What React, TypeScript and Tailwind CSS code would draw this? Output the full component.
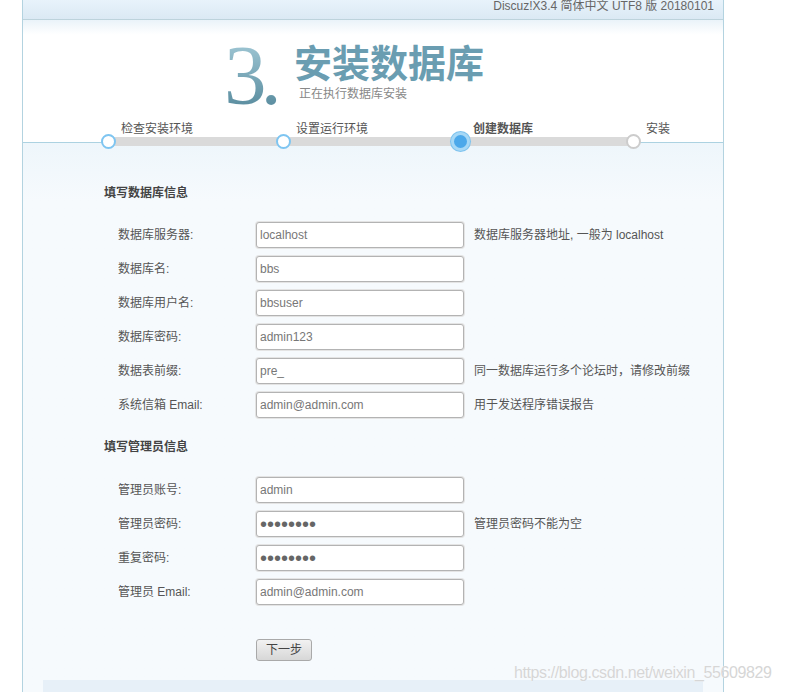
import React from 'react';

const steps = [
	{ label: '检查安装环境', x: 85, state: 'done' },
	{ label: '设置运行环境', x: 260, state: 'done' },
	{ label: '创建数据库', x: 437, state: 'current' },
	{ label: '安装', x: 610, state: 'todo' },
];

const dbFields = [
	{ label: '数据库服务器:', value: 'localhost', hint: '数据库服务器地址, 一般为 localhost' },
	{ label: '数据库名:', value: 'bbs', hint: '' },
	{ label: '数据库用户名:', value: 'bbsuser', hint: '' },
	{ label: '数据库密码:', value: 'admin123', hint: '' },
	{ label: '数据表前缀:', value: 'pre_', hint: '同一数据库运行多个论坛时，请修改前缀' },
	{ label: '系统信箱 Email:', value: 'admin@admin.com', hint: '用于发送程序错误报告' },
];

const adminFields = [
	{ label: '管理员账号:', value: 'admin', hint: '', password: false },
	{ label: '管理员密码:', value: 'admin123', hint: '管理员密码不能为空', password: true },
	{ label: '重复密码:', value: 'admin123', hint: '', password: true },
	{ label: '管理员 Email:', value: 'admin@admin.com', hint: '', password: false },
];

function Field({ label, value, hint, password }: { label: string; value: string; hint: string; password?: boolean }) {
	return (
		<div className="grid grid-cols-[138px_208px_auto] items-center h-[26px]">
			<span className="text-[12px] text-[#555]">{label}</span>
			<input
				type="text"
				defaultValue={password ? '•'.repeat(value.length) : value}
				readOnly
				className={`h-[26px] w-[208px] px-[3px] bg-white border border-[#b3b3b3] rounded-[3px] shadow-[0_0_0_1px_#e4e4e4] outline-none ${password ? 'text-[20px] text-[#666]' : 'text-[12px] text-[#777]'}`}
				style={{ fontFamily: '"Liberation Sans", Arial, sans-serif' }}
			/>
			<span className="pl-[10px] text-[12px] text-[#555] whitespace-nowrap">{hint}</span>
		</div>
	);
}

export default function App() {
	return (
		<div
			className="relative min-h-[692px] bg-white overflow-hidden"
			style={{ fontFamily: '"Liberation Sans", "Noto Sans CJK SC", sans-serif' }}
		>
			<div className="ml-[22px] w-[702px] min-h-[692px] border-x border-[#b3d3e0] flex flex-col">
				{/* top band */}
				<div className="h-[20px] border-b border-[#bdd3dc] bg-gradient-to-b from-[#e8f3fb] to-[#dbe9f4] flex justify-end pr-[9px]">
					<span className="text-[12px] leading-[13px] text-[#666]">Discuz!X3.4 简体中文 UTF8 版 20180101</span>
				</div>

				{/* title */}
				<div className="relative h-[122px] bg-gradient-to-b from-[#eaf3f9] via-white via-[12%] to-white">
					<div className="flex pl-[201px] pt-[13px]">
						<div
							className="w-[70px] text-[85px] leading-[85px] bg-gradient-to-b from-[#a9cfdc] to-[#4f8497] bg-clip-text text-transparent tracking-[-6px]"
							style={{ fontFamily: '"Liberation Serif", serif' }}
						>
							3.
						</div>
						<div className="pt-[9px]">
							<div className="text-[38px] leading-[38px] font-bold text-[#6a9db1]" style={{ fontFamily: '"Noto Sans CJK SC", sans-serif' }}>
								安装数据库
							</div>
							<div className="pl-[5px] mt-[7px] text-[12px] leading-[14px] text-[#888]">正在执行数据库安装</div>
						</div>
					</div>

					{/* steps */}
					<div className="absolute inset-0 z-10">
						<div className="absolute left-[85px] w-[525px] top-[117px] h-[9px] bg-[#dadada]" />
						{steps.map((s) => (
							<React.Fragment key={s.label}>
								<span
									className={`absolute top-[101px] text-[12px] leading-[16px] text-[#555] ${s.state === 'current' ? 'font-bold' : ''}`}
									style={{ left: s.x + 13 }}
								>
									{s.label}
								</span>
								{s.state === 'current' ? (
									<span
										className="absolute top-[112px] w-[19px] h-[19px] rounded-full bg-[#4ba8ea] border-[3px] border-[#a6d8f6] shadow-[0_0_0_1px_#7cc2ee]"
										style={{ left: s.x - 9.5 }}
									/>
								) : (
									<span
										className={`absolute top-[114px] w-[15px] h-[15px] rounded-full bg-white border-[2px] ${s.state === 'done' ? 'border-[#7ec5f1]' : 'border-[#cccccc]'}`}
										style={{ left: s.x - 7.5 }}
									/>
								)}
							</React.Fragment>
						))}
					</div>
				</div>

				{/* form panel */}
				<div className="flex-1 border-t border-[#acd2e1] bg-gradient-to-b from-[#eef6fb] to-[#f6fafd] to-[10%] flex flex-col">
					<div className="pl-[81px] pt-[42px] text-[12px] leading-[16px] font-bold text-[#444]">填写数据库信息</div>
					<div className="pl-[95px] pt-[21px] flex flex-col gap-[8px]">
						{dbFields.map((f) => (
							<Field key={f.label} {...f} />
						))}
					</div>
					<div className="pl-[81px] pt-[21px] text-[12px] leading-[16px] font-bold text-[#444]">填写管理员信息</div>
					<div className="pl-[95px] pt-[22px] flex flex-col gap-[8px]">
						{adminFields.map((f) => (
							<Field key={f.label} {...f} />
						))}
					</div>
					<div className="pl-[233px] pt-[32px]">
						<button className="w-[56px] h-[22px] rounded-[3px] border border-[#a9a9a9] bg-gradient-to-b from-[#f2f2f2] to-[#d7d7d7] text-[12px] text-[#444]">
							下一步
						</button>
					</div>
					<div className="mx-[20px] mt-[19px] h-[40px] bg-[#e7f0f8]" />
				</div>
			</div>

			<div className="absolute left-[514px] top-[664px] text-[16px] leading-[18px] tracking-[-0.4px] text-[#d6d6d6] [text-shadow:0_0_1px_#ffffff]">
				https://blog.csdn.net/weixin_55609829
			</div>
		</div>
	);
}
